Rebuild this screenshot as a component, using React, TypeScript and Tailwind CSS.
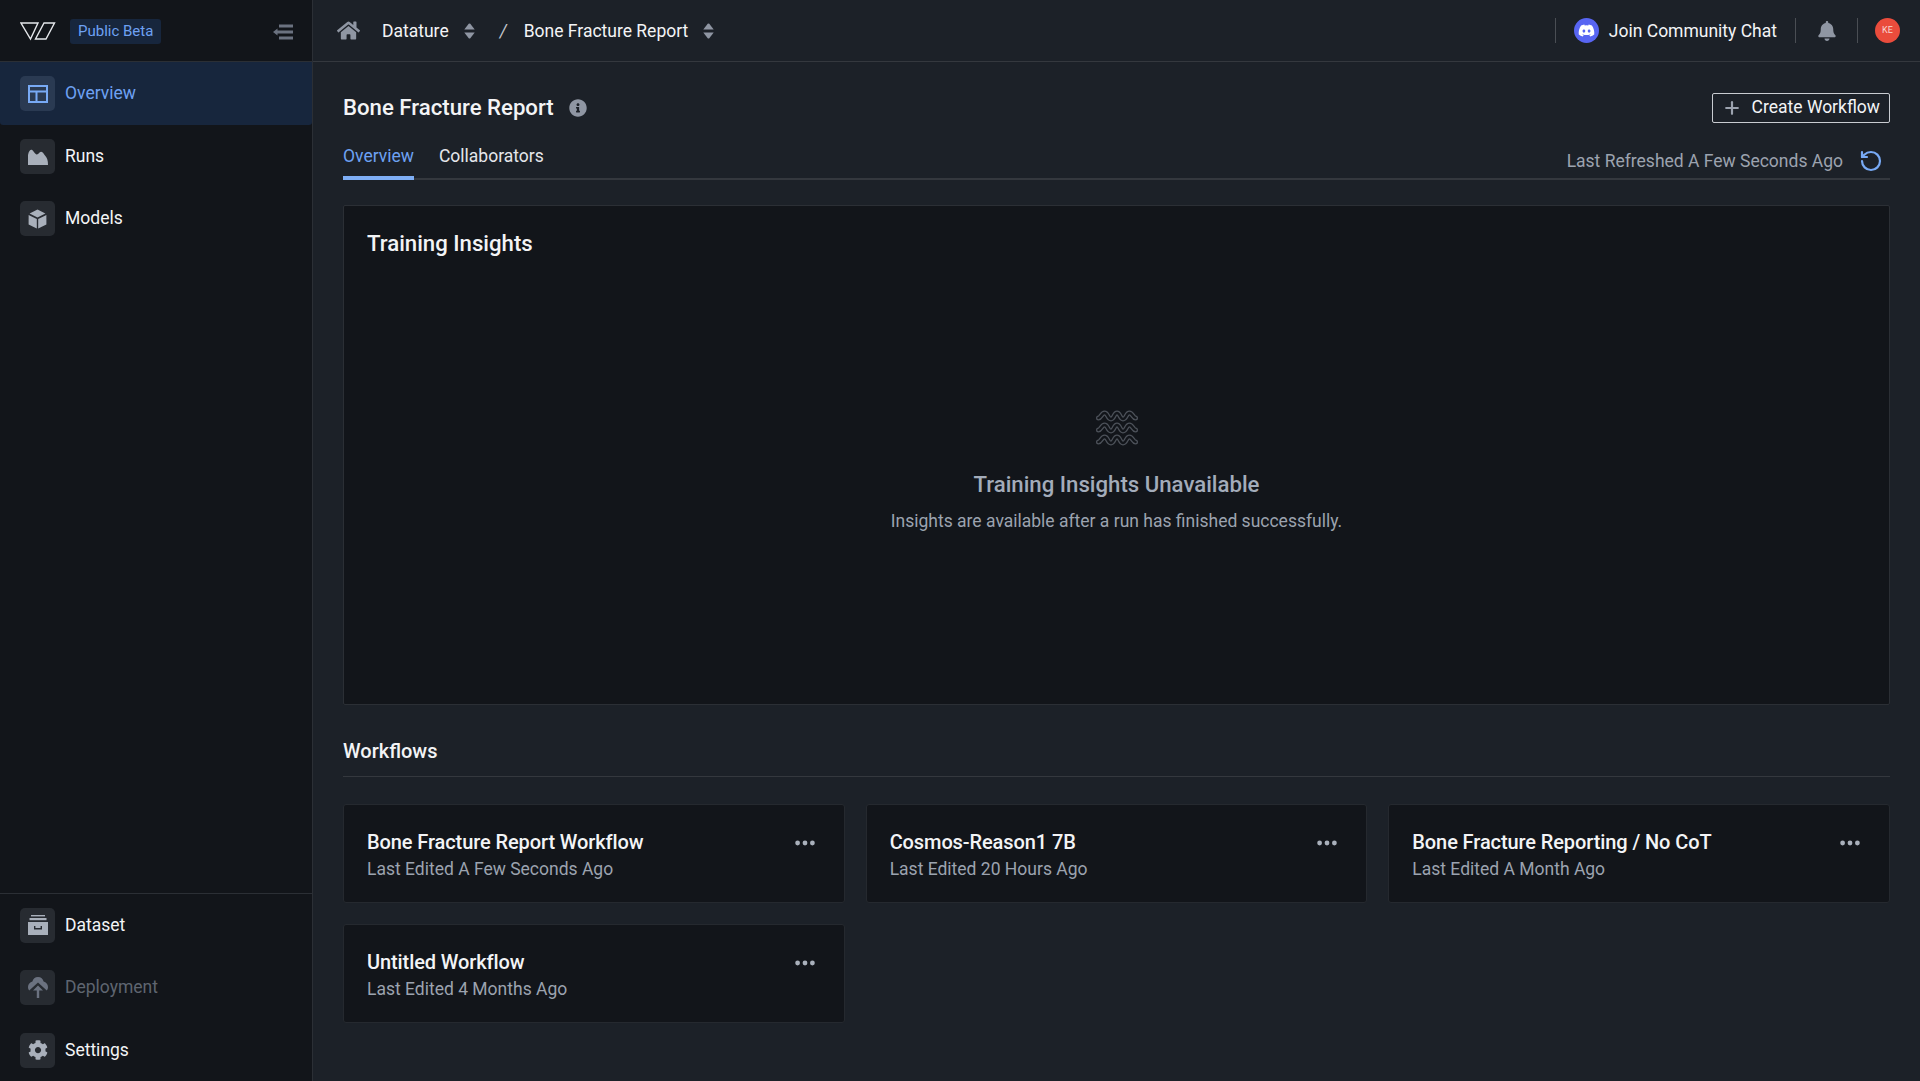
import React from "react";
import { FaHome, FaBell, FaCog, FaDiscord, FaInfoCircle } from "react-icons/fa";
import { Plus, RotateCcw } from "lucide-react";

const Logo = () => (
  <svg width="36" height="20" viewBox="0 0 36 20" fill="none" stroke="#e5e7eb" strokeWidth="1.4">
    <path d="M1 2 H18 L10.5 18 Z" />
    <path d="M24 2 H34.5 L26 18 H15.5 Z" />
  </svg>
);

const Collapse = () => (
  <svg width="20" height="16" viewBox="0 0 20 16" fill="#6b7280">
    <rect x="6" y="0.5" width="14" height="3" />
    <rect x="4" y="6.5" width="16" height="3" />
    <rect x="6" y="12.5" width="14" height="3" />
    <path d="M0 8 L4.5 4.5 V11.5 Z" />
  </svg>
);

const LayoutIcon = () => (
  <svg width="20" height="18" viewBox="0 0 20 18" fill="none" stroke="#78aaf5" strokeWidth="2">
    <rect x="1" y="1" width="18" height="16" />
    <path d="M1 6.5 H19 M8.5 6.5 V17" />
  </svg>
);

const AreaIcon = () => (
  <svg width="20" height="16" viewBox="0 0 20 16" fill="#a9b0bb">
    <path d="M0 16 V6 C1 1 3 0 4.5 1.2 C6 2.5 7 5 8.5 5.5 C10.5 6 11 3 13 2.8 C15 2.6 15.5 5 17 6.5 C19 8.5 20 11 20 16 Z" />
  </svg>
);

const CubeIcon = () => (
  <svg width="19" height="20" viewBox="0 0 19 20" fill="#a9b0bb">
    <path d="M9.5 0.6 L17.4 4.6 L9.5 8.6 L1.6 4.6 Z" />
    <path d="M0.6 6 L8.8 10 V19.6 L0.6 15.4 Z" />
    <path d="M18.4 6 L10.2 10 V19.6 L18.4 15.4 Z" />
  </svg>
);

const ArchiveIcon = () => (
  <svg width="20" height="20" viewBox="0 0 20 20" fill="#a9b0bb">
    <rect x="3" y="0" width="14" height="1.4" />
    <rect x="1.5" y="3" width="17" height="2.2" />
    <path fillRule="evenodd" d="M0 7 H20 V20 H0 Z M6 11 V14.5 H14 V11 H12.6 V13 H7.4 V11 Z" />
  </svg>
);

const UploadCloud = () => (
  <svg width="20" height="21" viewBox="0 0 20 21" fill="#6b7280">
    <path d="M10 0 C13 0 15 2 15.6 4.6 C18 5.2 20 7.4 20 10 C20 11.4 19.5 12.6 18.8 13.6 L10 5.6 L1.2 13.6 C0.5 12.6 0 11.4 0 10 C0 7.4 2 5.2 4.4 4.6 C5 2 7 0 10 0 Z" />
    <path d="M10 8.4 L15 13.4 H11.2 V21 H8.8 V13.4 H5 Z" />
  </svg>
);

const SortIcon = () => (
  <svg width="11" height="16" viewBox="0 0 11 16" fill="#8f96a3">
    <path d="M0.3 6.6 L4.7 0.8 Q5.5 0 6.3 0.8 L10.7 6.6 Z" />
    <path d="M0.3 9.4 L4.7 15.2 Q5.5 16 6.3 15.2 L10.7 9.4 Z" />
  </svg>
);

const Dots = () => (
  <svg width="20" height="6" viewBox="0 0 20 6" fill="#a9b0bb">
    <circle cx="2.6" cy="3" r="2.4" />
    <circle cx="10" cy="3" r="2.4" />
    <circle cx="17.4" cy="3" r="2.4" />
  </svg>
);

const wave = (y: number) =>
  `M2.5 ${y - 1} C5 ${y - 1} 5.5 ${y - 6} 8.5 ${y - 6} C12 ${y - 6} 11.5 ${y} 15 ${y} C18 ${y} 18 ${y - 6} 21 ${y - 6} C24 ${y - 6} 24 ${y} 27 ${y} C30.5 ${y} 30 ${y - 6} 33.5 ${y - 6} C36.5 ${y - 6} 37 ${y - 1} 39.5 ${y - 1}`;

const Waves = () => (
  <svg width="42" height="37" viewBox="0 0 42 37" fill="none" strokeLinecap="round">
    {[9, 21, 33].map((y) => (
      <g key={y}>
        <path d={wave(y)} stroke="#4d525a" strokeWidth="5" />
        <path d={wave(y)} stroke="#12151a" strokeWidth="2.4" />
      </g>
    ))}
  </svg>
);

function NavItem({
  icon,
  label,
  active,
  dim,
  h,
}: {
  icon: React.ReactNode;
  label: string;
  active?: boolean;
  dim?: boolean;
  h: string;
}) {
  return (
    <div className={`${h} flex items-center pl-5 gap-[10px] ${active ? "bg-[#17263d] rounded-b-[3px]" : ""}`}>
      <div
        className={`w-[35px] h-[35px] rounded-[5px] flex items-center justify-center ${
          active ? "bg-[#2a3a52]" : "bg-[#272b31]"
        }`}
      >
        {icon}
      </div>
      <span
        className={`text-[17.5px] ${
          active ? "text-[#6ea1f3]" : dim ? "text-[#5f6570]" : "text-[#f3f4f6]"
        }`}
      >
        {label}
      </span>
    </div>
  );
}

function Card({ title, sub }: { title: string; sub: string }) {
  return (
    <div className="h-[99px] bg-[#12151a] border border-[#25292f] rounded-[3px] pl-[23px] pr-[29px] pt-[24px] flex justify-between">
      <div>
        <div className="text-[20px] leading-[26px] font-medium text-[#f3f4f6] tracking-[-0.1px]">{title}</div>
        <div className="text-[17.5px] leading-[24px] text-[#9ca3af] mt-[2px]">{sub}</div>
      </div>
      <div className="pt-[11px]">
        <Dots />
      </div>
    </div>
  );
}

export default function App() {
  return (
    <div className="w-[1920px] h-[1081px] flex overflow-hidden bg-[#1c2128] font-['Roboto',sans-serif]">
      <aside className="w-[313px] shrink-0 bg-[#12151a] border-r border-[#2b2f35] flex flex-col">
        <div className="h-[62px] shrink-0 border-b border-[#2b2f35] flex items-center pl-5 pr-[19px]">
          <Logo />
          <span className="ml-[14px] h-[25px] mt-[1px] px-2 rounded-[3px] bg-[#17263d] text-[#6ea1f3] text-[15px] leading-[25px]">
            Public Beta
          </span>
          <div className="ml-auto flex mt-[3px]">
            <Collapse />
          </div>
        </div>
        <NavItem h="h-[63px] shrink-0" active icon={<LayoutIcon />} label="Overview" />
        <NavItem h="h-[63px] shrink-0" icon={<AreaIcon />} label="Runs" />
        <NavItem h="h-[61px] shrink-0" icon={<CubeIcon />} label="Models" />
        <div className="flex-1" />
        <div className="border-t border-[#2b2f35]">
          <NavItem h="h-[62px]" icon={<ArchiveIcon />} label="Dataset" />
          <NavItem h="h-[63px]" dim icon={<UploadCloud />} label="Deployment" />
          <NavItem h="h-[62px]" icon={<FaCog size={20} color="#a9b0bb" />} label="Settings" />
        </div>
      </aside>
      <main className="flex-1 flex flex-col min-w-0">
        <header className="h-[62px] shrink-0 border-b border-[#34383e] flex items-center pl-[24px] pr-[20px]">
          <FaHome size={23} color="#8f96a3" />
          <span className="ml-[22px] text-[17.5px] mt-[1px] text-[#f3f4f6]">Datature</span>
          <span className="ml-[15px] flex">
            <SortIcon />
          </span>
          <span className="ml-[25px] text-[17.5px] mt-[1px] text-[#c4c8ce] italic">/</span>
          <span className="ml-[17px] text-[17.5px] mt-[1px] text-[#f3f4f6]">Bone Fracture Report</span>
          <span className="ml-[15px] flex">
            <SortIcon />
          </span>
          <div className="ml-auto h-[25px] border-l border-[#4a4e54] pl-[18px] flex items-center">
            <span className="w-[25px] h-[25px] rounded-full bg-[#5865f2] flex items-center justify-center">
              <FaDiscord size={17} color="#fff" />
            </span>
            <span className="ml-[10px] text-[17.5px] mt-[1px] text-[#f3f4f6]">Join Community Chat</span>
          </div>
          <div className="ml-[18px] h-[25px] border-l border-[#4a4e54] pl-[21px] pr-[20px] flex items-center">
            <FaBell size={20} color="#8f96a3" />
          </div>
          <div className="h-[25px] border-l border-[#4a4e54] pl-[17px] flex items-center">
            <span className="w-[25px] h-[25px] rounded-full bg-[#ea4c3c] flex items-center justify-center text-[9px] text-[#f8d8d2]">
              KE
            </span>
          </div>
        </header>
        <div className="flex-1 pl-[30px] pr-[30px] flex flex-col">
          <div className="mt-[32px] h-[28px] flex items-center justify-between">
            <div className="flex items-center">
              <h1 className="text-[22.2px] font-medium text-[#f3f4f6]">Bone Fracture Report</h1>
              <FaInfoCircle className="ml-[15px]" size={18} color="#8f96a3" />
            </div>
            <button className="h-[30px] border border-[#c9ccd1] rounded-[2px] flex items-center pl-[9px] pr-[9px]">
              <Plus size={20} color="#9ca3af" strokeWidth={2.6} />
              <span className="ml-[10px] text-[17.5px] leading-[24px] mb-[3px] text-[#f3f4f6]">Create Workflow</span>
            </button>
          </div>
          <div className="mt-[14px] h-[44px] border-b-2 border-[#34383e] flex items-start justify-between">
            <div className="flex gap-[25px] pt-[5px]">
              <div className="h-[39px] border-b-[4px] border-[#7eaef5] text-[17.5px] leading-[30px] text-[#6ea1f3]">Overview</div>
              <div className="text-[17.5px] leading-[30px] text-[#e5e7eb]">Collaborators</div>
            </div>
            <div className="flex items-center pt-[10px] pr-[7px]">
              <span className="text-[17.5px] leading-[30px] text-[#9ca3af]">Last Refreshed A Few Seconds Ago</span>
              <RotateCcw className="ml-[16px]" size={24} color="#78aaf5" strokeWidth={2.2} />
            </div>
          </div>
          <section className="mt-[25px] h-[500px] bg-[#12151a] border border-[#2b2f35] rounded-[2px] flex flex-col">
            <h2 className="mt-[22px] ml-[23px] text-[22.2px] leading-[30px] font-medium text-[#f3f4f6]">Training Insights</h2>
            <div className="mt-[152px] flex flex-col items-center">
              <Waves />
              <div className="mt-[22px] text-[22.2px] leading-[30px] font-medium text-[#a3acba]">Training Insights Unavailable</div>
              <div className="mt-[9px] text-[17.5px] leading-[26px] text-[#9ca3af]">Insights are available after a run has finished successfully.</div>
            </div>
          </section>
          <div className="mt-[32px] h-[40px] border-b border-[#34383e] text-[20px] leading-[28px] font-medium text-[#f3f4f6]">
            Workflows
          </div>
          <div className="mt-[27px] grid grid-cols-3 gap-x-[21px] gap-y-[21px]">
            <Card title="Bone Fracture Report Workflow" sub="Last Edited A Few Seconds Ago" />
            <Card title="Cosmos-Reason1 7B" sub="Last Edited 20 Hours Ago" />
            <Card title="Bone Fracture Reporting / No CoT" sub="Last Edited A Month Ago" />
            <Card title="Untitled Workflow" sub="Last Edited 4 Months Ago" />
          </div>
        </div>
      </main>
    </div>
  );
}
